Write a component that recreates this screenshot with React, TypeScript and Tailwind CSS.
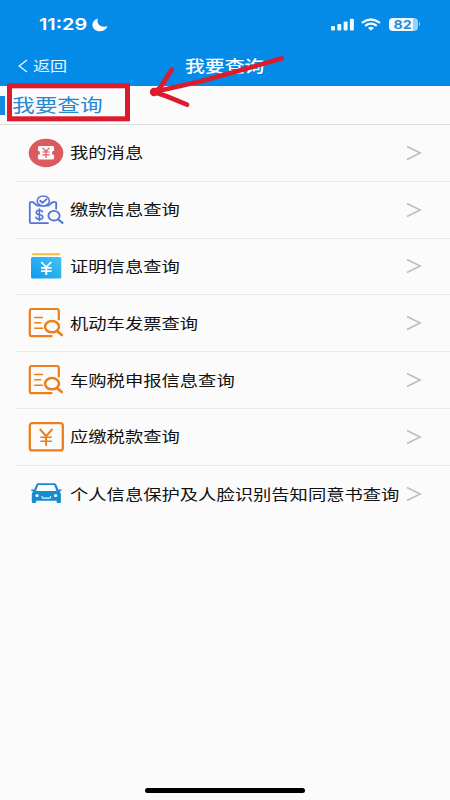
import React from 'react';

function Wide({ children, className = '' }: { children: React.ReactNode; className?: string }) {
  return (
    <span className={`inline-block origin-left scale-x-[1.22] whitespace-nowrap ${className}`}>{children}</span>
  );
}

function MessageIcon() {
  return (
    <svg width="36" height="30" viewBox="0 0 36 30">
      <ellipse cx="18" cy="15" rx="17.3" ry="14.2" fill="#db5a5e" />
      <path
        d="M11.5 8h13q1.6 0 1.6 1.6v3.2a2 2 0 0 0 0 4.2v3q0 1.6-1.6 1.6h-13Q9.900 21.600 9.900 20v-3a2 2 0 0 0 0-4.200V9.600Q9.900 8 11.500 8Z"
        fill="#fffafa"
      />
      <path d="M14.600 9.800 18 13.400 21.400 9.800M18 13.400V20M14.500 14h7M14.500 16.800h7" fill="none" stroke="#db5a5e" strokeWidth="1.200" />
    </svg>
  );
}

function PaymentIcon() {
  return (
    <svg width="36" height="30" viewBox="0 0 36 30" fill="none" stroke="#5673d4" strokeWidth="1.800" strokeLinecap="round" strokeLinejoin="round">
      <path d="M20 28.200H3q-1.200 0-1.200-1.200V8q0-.8.8-.8h2.600l3.900 3.300h11.200l4.200-3.300h2.900q.8 0 .8.800v5.800" />
      <ellipse cx="15.300" cy="5.900" rx="6.100" ry="5" fill="#fbfbfb" strokeWidth="1.500" />
      <path d="m12.200 5.800 2.300 2 4.100-3.700" />
      <path d="M14.500 16.800c-.4-1.300-1.700-1.600-3.100-1.600-1.900 0-3.200.8-3.200 2.200 0 3.400 6.600 1.300 6.600 4.500 0 1.500-1.400 2.300-3.400 2.300-1.800 0-3.300-.6-3.500-2M11.400 14v11.500" strokeWidth="1.600" />
      <ellipse cx="26" cy="20.700" rx="5.600" ry="4.800" />
      <path d="m30.200 24.500 4.300 3.300" strokeWidth="2.100" />
    </svg>
  );
}

function CertificateIcon() {
  return (
    <svg width="36" height="30" viewBox="0 0 36 30">
      <defs>
        <linearGradient id="wallet" x1="1" y1="0" x2="0" y2="1">
          <stop offset="0" stopColor="#48c3f2" />
          <stop offset="1" stopColor="#0d9af0" />
        </linearGradient>
      </defs>
      <rect x="4.200" y="2.300" width="28" height="2" rx=".5" fill="#f2bd42" />
      <rect x="3" y="6" width="30.300" height="21.500" rx="1.500" fill="url(#wallet)" />
      <path d="m13.300 11 5 5.200 5-5.200M18.300 16v8M13 16.800h10.600M13 20.200h10.600" fill="none" stroke="#fff" strokeWidth="1.800" />
    </svg>
  );
}

function InvoiceIcon() {
  return (
    <svg width="36" height="30" viewBox="0 0 36 30" fill="none" stroke="#eb7f1c" strokeWidth="2.200" strokeLinecap="round" strokeLinejoin="round">
      <path d="M23.500 28.200H3.800q-2 0-2-2V3q0-2 2-2h25q2 0 2 2v8.500" />
      <path d="M6.800 9.400h7.600M6.800 14.800h6M6.800 20.200h7.600" strokeWidth="1.500" />
      <ellipse cx="24" cy="18.700" rx="7" ry="5.600" strokeWidth="2.500" />
      <path d="m29.500 23.500 4.300 3.500" strokeWidth="2.700" />
    </svg>
  );
}

function TaxIcon() {
  return (
    <svg width="36" height="30" viewBox="0 0 36 30" fill="none" stroke="#eb7f1c" strokeWidth="2.300">
      <rect x="1.800" y="1.200" width="33" height="27.200" rx="2.500" />
      <path d="m11.800 7 6.300 7.200L24.400 7M18.100 14v9.700" strokeWidth="2" />
      <path d="M12.300 15.300h11.600M12.300 19.300h11.600" strokeWidth="1.600" />
    </svg>
  );
}

function CarIcon() {
  return (
    <svg width="36" height="30" viewBox="0 0 36 30">
      <path
        fillRule="evenodd"
        fill="#168bd0"
        d="M10 4.200h16.400q1.400 0 1.900 1.200l2.300 5.400 2.200-.6q.8 0 .8.700 0 .9-1 1.200l-1 .3q1.300 1.300 1.300 3v7.500q0 1-1.200 1h-2q-1.100 0-1.100-1v-1.100H8.200v1.100q0 1-1.100 1H5q-1.200 0-1.200-1v-7.500q0-1.700 1.300-3l-1-.3q-1-.3-1-1.200 0-.7.800-.7l2.200.6 2.200-5.400q.5-1.200 1.700-1.200ZM10.300 5.900 8 12h20.500l-2.400-6.100ZM9 15.300a1.700 1.400 0 1 0 0 2.800 1.700 1.400 0 1 0 0-2.800ZM27.600 15.300a1.700 1.400 0 1 0 0 2.800 1.700 1.400 0 1 0 0-2.800Z"
      />
      <path d="M14 17.700q0 1.500 1.500 1.500h5.600q1.500 0 1.500-1.500" fill="none" stroke="#e9f7ff" strokeWidth="1.300" strokeLinecap="round" />
    </svg>
  );
}

const items = [
  { label: '我的消息', icon: <MessageIcon /> },
  { label: '缴款信息查询', icon: <PaymentIcon /> },
  { label: '证明信息查询', icon: <CertificateIcon /> },
  { label: '机动车发票查询', icon: <InvoiceIcon /> },
  { label: '车购税申报信息查询', icon: <InvoiceIcon /> },
  { label: '应缴税款查询', icon: <TaxIcon /> },
  { label: '个人信息保护及人脸识别告知同意书查询', icon: <CarIcon /> },
];

function StatusBar() {
  return (
    <div className="flex h-[48px] items-center pl-[39px] pr-[30px] text-white">
      <span className="w-[53px] pt-px font-['Inter'] text-[16.500px] leading-none font-semibold">
        <span className="inline-block origin-left scale-x-[1.200]">11:29</span>
      </span>
      <svg className="mt-px" width="16" height="14" viewBox="0 0 16 14">
        <path d="M5.800.5C4.400 5.700 8 10.300 15.600 8.300 14 11.600 11.300 13.300 8 13.300 3.700 13.300.4 10.600.4 7 .4 4 2.500 1.500 5.800.5Z" fill="#fff" />
      </svg>
      <div className="ml-auto flex items-center">
        <svg width="24" height="13" viewBox="0 0 24 13" fill="#f1faff">
          <rect x="0" y="8" width="4" height="4.500" rx="1" />
          <rect x="6.300" y="6" width="4" height="6.500" rx="1" />
          <rect x="12.600" y="3.500" width="4" height="9" rx="1" />
          <rect x="18.900" y=".8" width="4" height="11.700" rx="1" />
        </svg>
        <svg className="ml-[6px]" width="20" height="13" viewBox="0 0 20 13" fill="none" stroke="#f1faff" strokeWidth="2.200">
          <path d="M.9 4.900Q9.900-1.900 19 4.900M4.100 7.900q5.800-4.400 11.700 0" />
          <path d="M6.900 9.900q3-2.100 6.100 0L9.950 12.600Z" fill="#f1faff" stroke="none" />
        </svg>
        <div className="ml-[8px] flex h-[13px] w-[29px] items-center justify-center overflow-hidden rounded-[4px] bg-linear-to-r from-[#f1faff] from-82% to-[#9bd0f5] to-82% pt-[2px] font-['Inter'] text-[12px] leading-none font-bold text-[#288bd4]">
          <span className="scale-x-[1.180]">82</span>
        </div>
        <div className="ml-[1px] h-[4px] w-[1.500px] rounded-r-full bg-[#8dccf6]" />
      </div>
    </div>
  );
}

export default function App() {
  return (
    <div className="relative flex h-[800px] w-[450px] flex-col overflow-hidden bg-[#fbfbfb] font-['Noto_Sans_CJK_SC',sans-serif] text-[#111]">
      <header className="h-[86px] bg-[#048ae7]">
        <StatusBar />
        <div className="flex h-[35px] items-center pl-[18px] text-white">
          <svg width="10" height="14" viewBox="0 0 10 14" fill="none" stroke="#e8f6ff" strokeWidth="1.300">
            <path d="M9 1 1.200 7 9 13" />
          </svg>
          <span className="ml-[5px] w-[152px] pb-[2px] text-[14px] leading-none text-[#e8f6ff]">
            <Wide>返回</Wide>
          </span>
          <span className="pb-px text-[16.300px] leading-none font-medium">
            <Wide>我要查询</Wide>
          </span>
        </div>
      </header>

      <section className="flex h-[39px] items-center border-b border-[#dedede]">
        <div className="mt-px h-[19px] w-[5px] bg-[#168ae0]" />
        <h1 className="ml-[7px] pb-[2px] text-[18.600px] leading-none text-[#2588d1]">
          <Wide>我要查询</Wide>
        </h1>
      </section>

      <main className="flex flex-col pl-[16px]">
        {items.map((item, i) => (
          <div
            key={item.label}
            className={`flex h-[56.800px] items-center pl-[12px] pr-[28px] ${i < items.length - 1 ? 'border-b border-[#ebebeb]' : ''}`}
          >
            {item.icon}
            <span className="ml-[5.500px] w-[270px] pb-[2px] text-[15px] leading-none">
              <Wide>{item.label}</Wide>
            </span>
            <svg className="ml-auto" width="16" height="16" viewBox="0 0 16 16" fill="none" stroke="#bdbdbd" strokeWidth="1.700">
              <path d="M1 1.500 14.200 8 1 14.500" />
            </svg>
          </div>
        ))}
      </main>

      <div className="mt-auto mb-[7px] ml-[145px] h-[5px] w-[160px] rounded-full bg-black" />

      <svg className="pointer-events-none absolute top-0 left-0" width="450" height="130" viewBox="0 0 450 130" fill="none" stroke="#dc1c2c">
        <rect x="9.500" y="85.800" width="118" height="33" strokeWidth="5" />
        <path d="M281.500 58.500 238 71 200 81.500 158 91" strokeWidth="4.700" strokeLinecap="round" strokeLinejoin="round" />
        <path d="M172 69.500C168 74 164.500 82 160 88L154 92 166 96 187 104.700" strokeWidth="4.700" strokeLinecap="round" strokeLinejoin="round" />
        <circle cx="154" cy="92" r="4.200" fill="#dc1c2c" stroke="none" />
      </svg>
    </div>
  );
}
